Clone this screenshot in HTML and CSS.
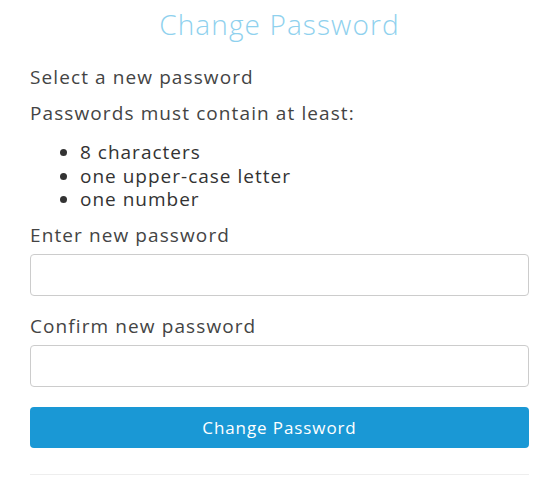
FILE: index.html
```html
<!DOCTYPE html>
<html>
<head>
<meta charset="utf-8">
<link rel="stylesheet" href="styles.css">
</head>
<body>
<div class="page">
  <h1 class="title">Change Password</h1>
  <p class="intro">Select a new password</p>
  <p class="intro">Passwords must contain at least:</p>
  <ul class="rules">
    <li>8 characters</li>
    <li>one upper-case letter</li>
    <li>one number</li>
  </ul>
  <label class="field">
    <span class="label">Enter new password</span>
    <input class="input" type="password">
  </label>
  <label class="field">
    <span class="label">Confirm new password</span>
    <input class="input" type="password">
  </label>
  <button class="btn">Change Password</button>
  <hr class="divider">
</div>
</body>
</html>
```
FILE: styles.css
```css
html, body {
  margin: 0;
  padding: 0;
  background: #fff;
}
body {
  font-family: "Open Sans", "Liberation Sans", sans-serif;
  color: #444;
}
.page {
  width: 499px;
  padding: 0 0 0 30px;
  display: flex;
  flex-direction: column;
}
.title {
  margin: 5px 0 0 0;
  text-align: center;
  font-weight: 300;
  font-size: 28px;
  line-height: 38px;
  color: #8fd1ee;
  letter-spacing: 1.1px;
}
.intro {
  margin: 22px 0 0 0;
  font-size: 19px;
  line-height: 24px;
  letter-spacing: 1.1px;
}
.intro + .intro {
  margin-top: 12px;
}
.rules {
  margin: 16px 0 0 0;
  padding-left: 50px;
  font-size: 19px;
  line-height: 23.5px;
  color: #333;
  font-weight: 500;
  letter-spacing: 1px;
}
.field {
  display: flex;
  flex-direction: column;
  margin-top: 11px;
}
.field + .field {
  margin-top: 18px;
}
.label {
  font-size: 19px;
  line-height: 24px;
  letter-spacing: 1.1px;
  color: #444;
}
.input {
  margin-top: 7px;
  height: 42px;
  box-sizing: border-box;
  border: 1px solid #ccc;
  border-radius: 4px;
  padding: 0 10px;
  font-size: 16px;
  outline: none;
}
.btn {
  margin-top: 20px;
  height: 41px;
  border: 0;
  border-radius: 4px;
  background: #1a98d5;
  color: #fff;
  font-family: "Open Sans", "Liberation Sans", sans-serif;
  font-size: 17px;
  letter-spacing: 0.9px;
  cursor: pointer;
}
.divider {
  margin: 26px 0 0 0;
  border: 0;
  border-top: 1px solid #eee;
}
```
